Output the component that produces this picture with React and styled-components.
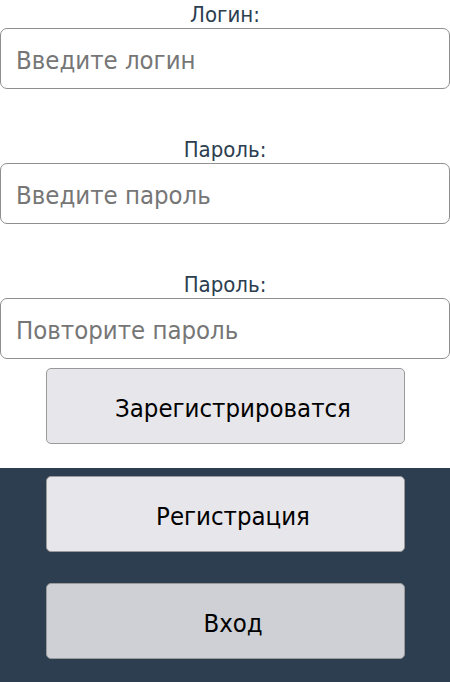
import styled, { createGlobalStyle } from 'styled-components';

const GlobalStyle = createGlobalStyle`
  html, body {
    margin: 0;
    padding: 0;
    background: #ffffff;
  }

  body {
    font-family: 'DejaVu Sans Condensed', 'DejaVu Sans', Verdana, sans-serif;
    color: #2c3e50;
  }

  * {
    box-sizing: border-box;
  }
`;

const Page = styled.div`
  display: flex;
  flex-direction: column;
  width: 450px;
  height: 682px;
  overflow: hidden;
`;

const Form = styled.form`
  display: flex;
  flex-direction: column;
  align-items: center;
  padding-bottom: 24px;
`;

const Field = styled.div`
  display: flex;
  flex-direction: column;
  align-items: center;
  width: 100%;
  margin-top: ${(props) => (props.first ? '2px' : '48px')};
`;

const Label = styled.label`
  font-size: 22px;
  line-height: 26px;
  color: #2c3e50;
`;

const Input = styled.input`
  width: 100%;
  height: 61px;
  padding: 3px 15px 0;
  border: 1px solid #8f8f8f;
  border-radius: 7px;
  font-family: 'DejaVu Sans Condensed', 'DejaVu Sans', Verdana, sans-serif;
  font-size: 25.5px;
  color: #2c3e50;
  background: #fff;
  outline: none;

  &::placeholder {
    color: #767676;
  }
`;

const Button = styled.button`
  width: 359px;
  height: 76px;
  padding: 3px 0 0 16px;
  border: 1px solid #9a9a9a;
  border-radius: 5px;
  background: ${(props) => (props.muted ? '#cfd0d5' : '#e7e6eb')};
  font-family: 'DejaVu Sans Condensed', 'DejaVu Sans', Verdana, sans-serif;
  font-size: 25.5px;
  color: #000;
  cursor: pointer;
`;

const SubmitButton = styled(Button)`
  margin-top: 9px;
`;

const Nav = styled.nav`
  flex: 1;
  display: flex;
  flex-direction: column;
  align-items: center;
  gap: 31px;
  padding-top: 8px;
  background: #2c3e50;
`;

const App = () => {
  const fields = [
    { label: 'Логин:', placeholder: 'Введите логин', type: 'text' },
    { label: 'Пароль:', placeholder: 'Введите пароль', type: 'password' },
    { label: 'Пароль:', placeholder: 'Повторите пароль', type: 'password' },
  ];

  return (
    <>
      <GlobalStyle />
      <Page>
        <Form onSubmit={(e) => e.preventDefault()}>
          {fields.map((field, index) => (
            <Field key={index} first={index === 0}>
              <Label>{field.label}</Label>
              <Input type={field.type} placeholder={field.placeholder} />
            </Field>
          ))}
          <SubmitButton type='submit'>Зарегистрироватся</SubmitButton>
        </Form>
        <Nav>
          <Button>Регистрация</Button>
          <Button muted>Вход</Button>
        </Nav>
      </Page>
    </>
  );
};

export default App;
